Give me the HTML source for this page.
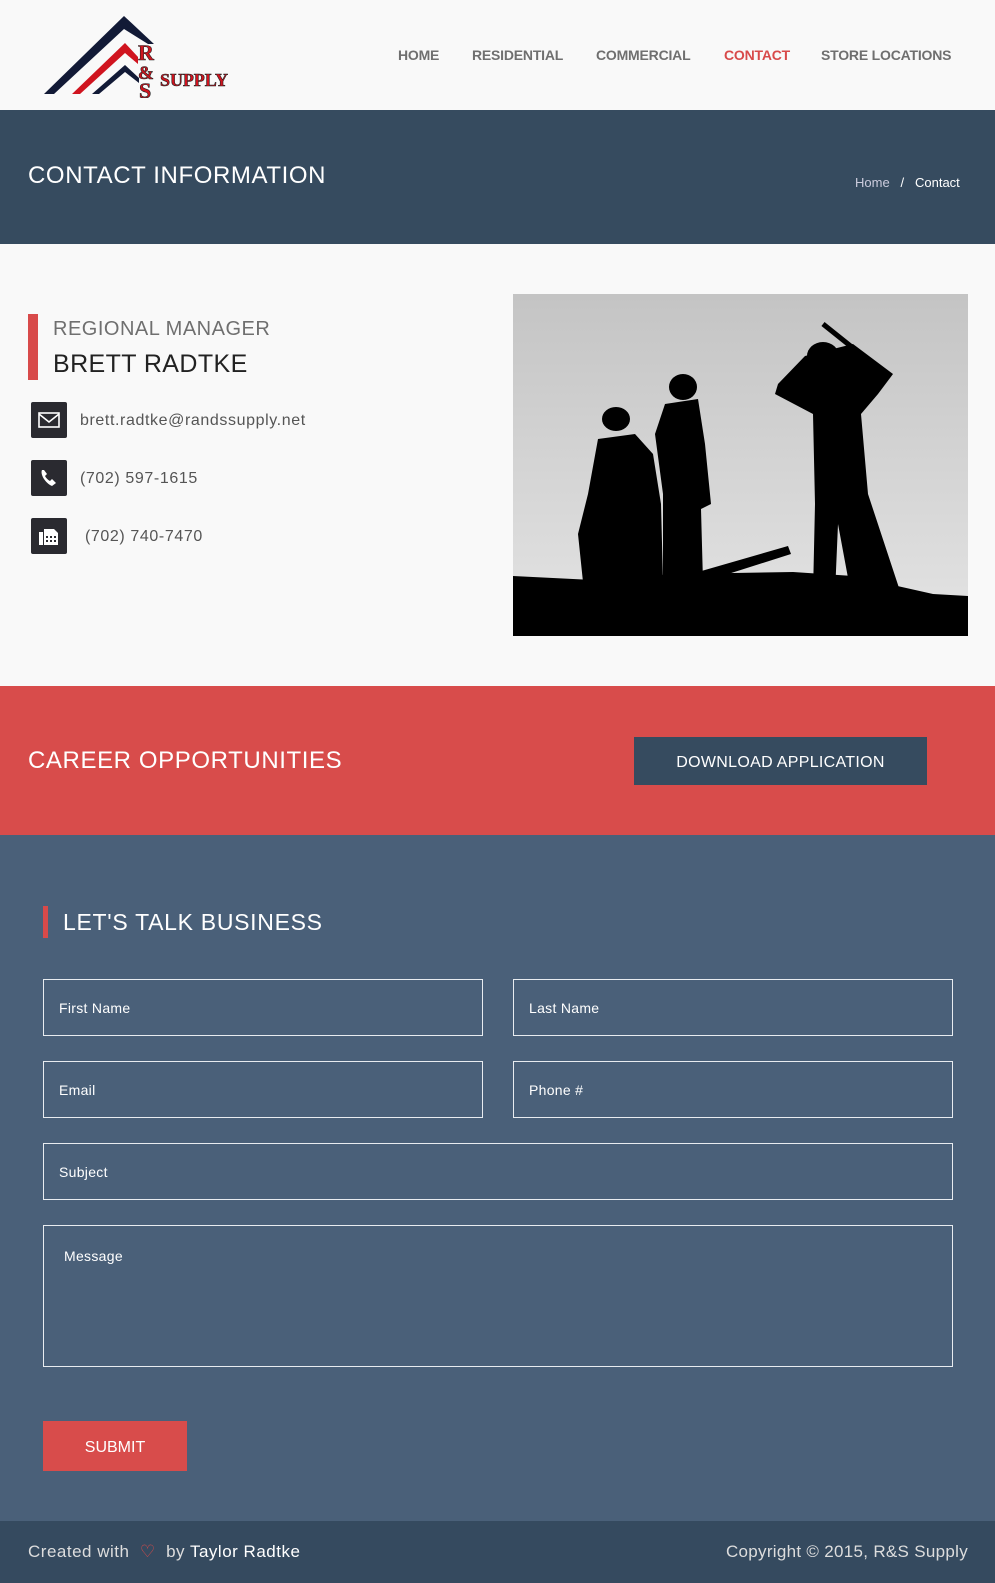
<!DOCTYPE html>
<html><head><meta charset="utf-8"><style>
*{box-sizing:border-box;margin:0;padding:0}
body{width:995px;height:1583px;overflow:hidden;background:#f9f9f9;font-family:"Liberation Sans",sans-serif;position:relative}
.a{position:absolute}
nav span{position:absolute;top:47px;font-size:14px;font-weight:bold;color:#6f6f6f;letter-spacing:-.2px}
.inp{position:absolute;border:1px solid #e8ecf0;color:#fff;font-size:14px;padding-left:15px;display:flex;align-items:center;letter-spacing:.3px}
.ico{position:absolute;left:31px;width:36px;height:36px;background:#2a2a30;border-radius:2px}
.ct{position:absolute;left:80px;font-size:16px;color:#555;letter-spacing:.6px}
</style></head><body>
<svg class="a" style="left:40px;top:12px" width="195" height="86" viewBox="0 0 195 86">
<polygon points="4,82 84,4 114,32 108,32 84,17 14,82" fill="#121a36"/>
<polygon points="32,82 85,31 98,45 98,52 85,41 40,82" fill="#d0141f"/>
<polygon points="52,82 85,53 99,66 99,71 85,60 59,82" fill="#121a36"/>
<text x="98" y="48" font-family="Liberation Serif" font-weight="bold" font-size="22" fill="#d0141f" stroke="#222" stroke-width=".6">R</text>
<text x="98" y="67" font-family="Liberation Serif" font-weight="bold" font-size="19" fill="#d0141f" stroke="#222" stroke-width=".6">&amp;</text>
<text x="99" y="86" font-family="Liberation Serif" font-weight="bold" font-size="22" fill="#d0141f" stroke="#222" stroke-width=".6">S</text>
<text x="120" y="74" font-family="Liberation Serif" font-weight="bold" font-size="18" fill="#d0141f" stroke="#222" stroke-width=".6" textLength="68">SUPPLY</text>
</svg>
<nav><span style="left:398px">HOME</span><span style="left:472px">RESIDENTIAL</span><span style="left:596px">COMMERCIAL</span><span style="left:724px;color:#d84a4a">CONTACT</span><span style="left:821px">STORE LOCATIONS</span></nav>
<div class="a" style="left:0;top:110px;width:995px;height:134px;background:#364b5f"></div>
<div class="a" style="left:28px;top:162px;font-size:24px;color:#fff;letter-spacing:.6px">CONTACT INFORMATION</div>
<div class="a" style="left:855px;top:175px;font-size:13px;color:#ccd"><span>Home</span>&nbsp;&nbsp;&nbsp;<span style="color:#fff">/&nbsp;&nbsp;&nbsp;Contact</span></div>
<div class="a" style="left:28px;top:314px;width:10px;height:66px;background:#d84a4a"></div>
<div class="a" style="left:53px;top:318px;font-size:20px;color:#6f6f6f;letter-spacing:.5px">REGIONAL MANAGER</div>
<div class="a" style="left:53px;top:350px;font-size:25px;color:#222;letter-spacing:.4px">BRETT RADTKE</div>
<div class="ico" style="top:402px"><svg width="36" height="36"><rect x="8" y="11" width="20" height="14" fill="none" stroke="#fff" stroke-width="1.6"/><path d="M8 12 L18 20 L28 12" fill="none" stroke="#fff" stroke-width="1.6"/></svg></div>
<div class="ct" style="top:412px">brett.radtke@randssupply.net</div>
<div class="ico" style="top:460px"><svg width="36" height="36"><path d="M11 10 C9 14 14 23 21 26 L25 23 L21 19 L19 21 C17 20 15 18 14 16 L16 14 L13 10 Z" fill="#fff"/></svg></div>
<div class="ct" style="top:470px">(702) 597-1615</div>
<div class="ico" style="top:518px"><svg width="36" height="36"><rect x="8" y="14" width="4" height="13" fill="#fff"/><path d="M13 11 h10 l4 4 v12 h-14z" fill="#fff"/><g fill="#2a2a30"><rect x="15" y="18" width="2" height="2"/><rect x="19" y="18" width="2" height="2"/><rect x="23" y="18" width="2" height="2"/><rect x="15" y="22" width="2" height="2"/><rect x="19" y="22" width="2" height="2"/><rect x="23" y="22" width="2" height="2"/></g></svg></div>
<div class="ct" style="top:528px;left:85px">(702) 740-7470</div>
<svg class="a" style="left:513px;top:294px" width="455" height="342" viewBox="0 0 455 342">
<defs><linearGradient id="g" x1="0" y1="0" x2="0" y2="1"><stop offset="0" stop-color="#c4c4c4"/><stop offset="1" stop-color="#e4e4e4"/></linearGradient></defs>
<rect width="455" height="342" fill="url(#g)"/>
<path d="M0 282 L80 286 L160 280 L280 278 L340 282 L420 300 L455 302 V342 H0Z" fill="#000"/>
<g fill="#000">
<ellipse cx="103" cy="125" rx="14" ry="12"/>
<path d="M85 145 L122 140 L140 160 L148 210 L150 288 L70 288 L65 240 L75 200 Z"/>
<ellipse cx="170" cy="93" rx="14" ry="13"/>
<path d="M152 110 L185 105 L192 150 L198 210 L188 215 L190 288 L150 288 L150 200 L142 140Z"/>
<path d="M185 278 L275 252 L278 260 L190 288Z"/>
<ellipse cx="310" cy="62" rx="16" ry="14"/>
<path d="M265 90 L292 62 L340 50 L380 80 L365 100 L348 120 L355 200 L388 300 L338 300 L325 230 L322 300 L300 300 L302 210 L300 120 L262 100Z"/>
<path d="M310 30 L345 58" stroke="#000" stroke-width="5"/>
</g>
</svg>
<div class="a" style="left:0;top:686px;width:995px;height:149px;background:#d84c4b"></div>
<div class="a" style="left:28px;top:747px;font-size:24px;color:#fff;letter-spacing:.6px">CAREER OPPORTUNITIES</div>
<div class="a" style="left:634px;top:737px;width:293px;height:48px;background:#364b5f;color:#fff;font-size:16px;display:flex;align-items:center;justify-content:center;padding-top:4px;letter-spacing:.3px">DOWNLOAD APPLICATION</div>
<div class="a" style="left:0;top:835px;width:995px;height:686px;background:#4a6079"></div>
<div class="a" style="left:43px;top:906px;width:5px;height:32px;background:#d84a4a"></div>
<div class="a" style="left:63px;top:909px;font-size:23px;color:#fff;letter-spacing:.7px">LET'S TALK BUSINESS</div>
<div class="inp" style="left:43px;top:979px;width:440px;height:57px">First Name</div>
<div class="inp" style="left:513px;top:979px;width:440px;height:57px">Last Name</div>
<div class="inp" style="left:43px;top:1061px;width:440px;height:57px">Email</div>
<div class="inp" style="left:513px;top:1061px;width:440px;height:57px">Phone #</div>
<div class="inp" style="left:43px;top:1143px;width:910px;height:57px">Subject</div>
<div class="inp" style="left:43px;top:1225px;width:910px;height:142px;align-items:flex-start;padding:22px 20px">Message</div>
<div class="a" style="left:43px;top:1421px;width:144px;height:50px;background:#d84c4b;color:#fff;font-size:16px;display:flex;align-items:center;justify-content:center;padding-top:4px">SUBMIT</div>
<div class="a" style="left:0;top:1521px;width:995px;height:62px;background:#354a5f"></div>
<div class="a" style="left:28px;top:1542px;font-size:17px;color:#ddd;letter-spacing:.5px">Created with&nbsp; <span style="color:#d84a4a">&#9825;</span>&nbsp; by <span style="color:#fff">Taylor Radtke</span></div>
<div class="a" style="right:27px;top:1542px;font-size:17px;color:#ddd;letter-spacing:.3px">Copyright © 2015, R&amp;S Supply</div>
</body></html>
